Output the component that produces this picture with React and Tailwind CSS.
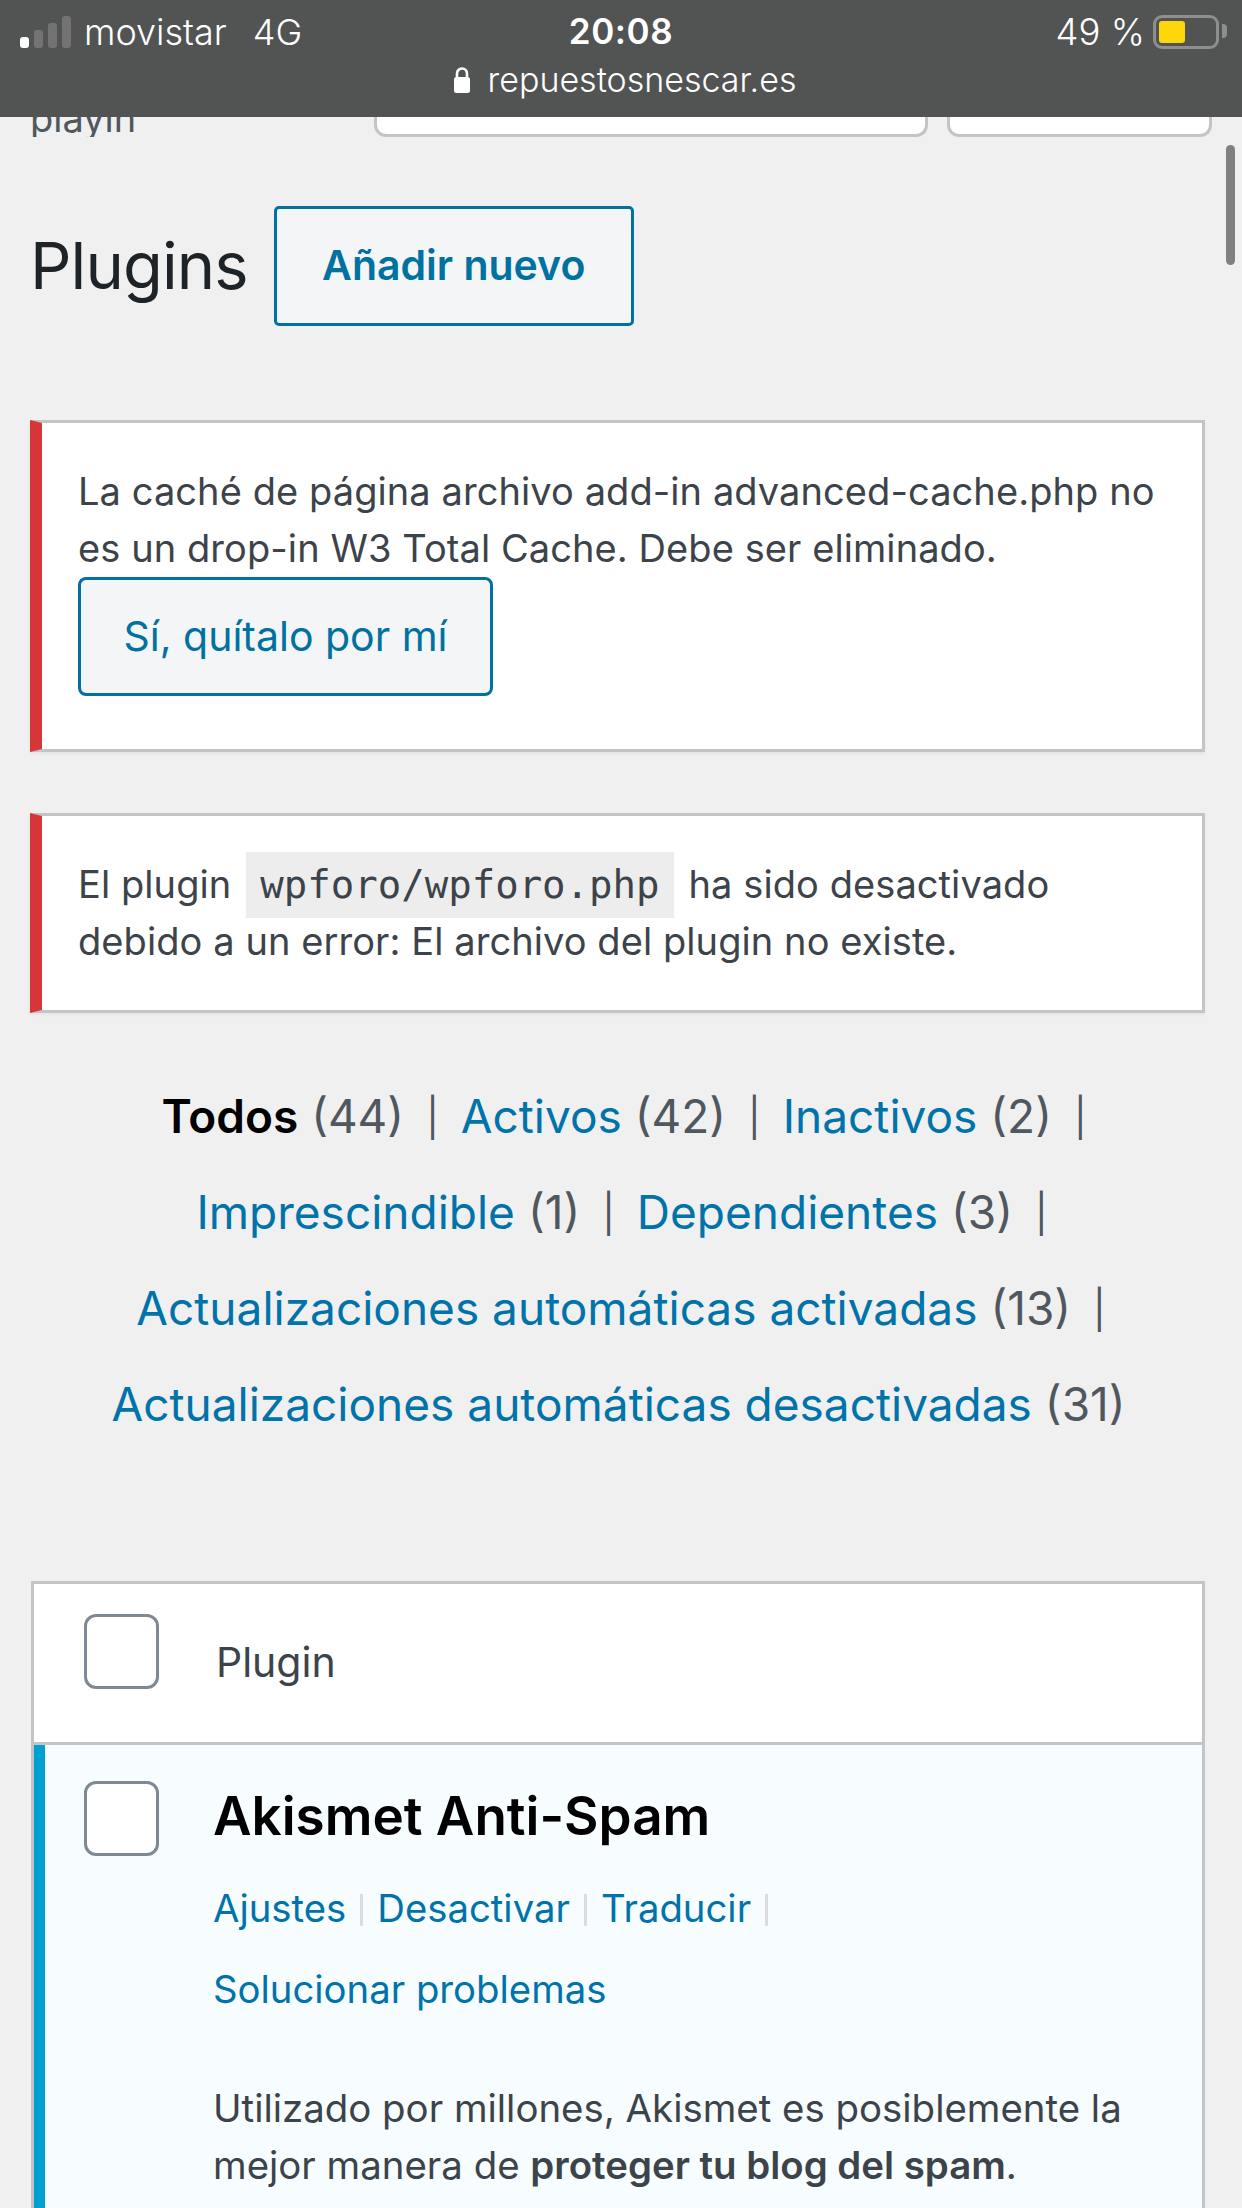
import React from "react";

const font = { fontFamily: "Inter, 'Noto Sans', sans-serif" };

function Check({ className = "" }) {
  return <div className={"w-[75px] h-[75px] bg-white border-[3px] border-[#7e8993] rounded-[12px] shrink-0 " + className} />;
}

function Bar({ last = false }) {
  return <span className={(last ? "ml-[22px] " : "mx-[22px] ") + "text-[38px] leading-none text-[#50575e] align-[2px]"}>|</span>;
}

function Count({ n }) {
  return <span className="text-[#50575e]"> ({n})</span>;
}

function L({ children }) {
  return <span className="text-[#0073aa]">{children}</span>;
}

function Sep() {
  return <span className="inline-block w-[3px] h-[32px] bg-[#dcdcde] mx-[14px] align-[-4px]" />;
}

export default function App() {
  return (
    <div className="relative w-[1242px] h-[2208px] overflow-hidden bg-[#f0f0f1]" style={font}>
      <header className="h-[117px] bg-[#525353] text-white relative z-10">
        <div className="flex items-center justify-between h-[64px] pl-[20px] pr-[8px]">
          <div className="flex items-center">
            <div className="flex items-end gap-[5px] h-[32px] mt-[-1px]">
              <div className="w-[9px] h-[11px] bg-white rounded-[3px]" />
              <div className="w-[9px] h-[18px] bg-[#737373] rounded-[3px]" />
              <div className="w-[9px] h-[25px] bg-[#737373] rounded-[3px]" />
              <div className="w-[9px] h-[32px] bg-[#737373] rounded-[3px]" />
            </div>
            <span className="ml-[13px] text-[36px] leading-[40px] font-light">movistar</span>
            <span className="ml-[26px] text-[36px] leading-[40px] font-light">4G</span>
          </div>
          <div className="flex items-center">
            <span className="text-[36.5px] leading-[40px] font-light mr-[8px]">49 %</span>
            <div className="relative w-[66px] h-[34px] border-[3px] border-[#8e8e8e] rounded-[9px] p-[3px] mr-[15px]">
              <div className="w-[26px] h-[22px] bg-[#ffd60a] rounded-[3px]" />
              <div className="absolute right-[-11px] top-[6px] w-[5px] h-[14px] bg-[#8e8e8e] rounded-r-[4px]" />
            </div>
          </div>
        </div>
        <div className="absolute left-0 right-0 top-[5px] text-center text-[35px] leading-[53px] font-semibold tracking-[0.6px]">20:08</div>
        <div className="absolute left-[7px] right-0 top-[58px] flex justify-center items-center">
          <svg width="18" height="28" viewBox="0 0 18 28" className="mr-[17px]" fill="none">
            <path d="M4 12V7.5a5 5 0 0 1 10 0V12" stroke="white" strokeWidth="2.6" />
            <rect x="1" y="11" width="16" height="16" rx="2.5" fill="white" />
          </svg>
          <span className="text-[34px] leading-[44px] font-light">repuestosnescar.es</span>
        </div>
      </header>

      <div className="flex items-end h-[20px] relative">
        <div className="h-[20px] overflow-hidden w-[374px] pl-[30px]">
          <div className="text-[38px] leading-[40px] text-[#50575e] mt-[-19px]">playin</div>
        </div>
        <div className="w-[554px] h-[20px] bg-white border-b-[3px] border-x-[3px] border-[#c3c4c7] rounded-b-[12px]" />
        <div className="w-[265px] h-[20px] ml-[19px] bg-white border-b-[3px] border-x-[3px] border-[#c3c4c7] rounded-b-[12px]" />
      </div>

      <div className="absolute left-[1226px] top-[145px] w-[9px] h-[120px] bg-[#808080] rounded-full" />

      <div className="flex items-center mt-[69px] pl-[30px]">
        <h1 className="text-[65px] leading-[80px] text-[#1d2327] font-normal tracking-[-0.9px]">Plugins</h1>
        <div className="ml-[26px] w-[360px] h-[120px] flex items-center justify-center bg-[#f3f5f6] border-[3px] border-[#0071a1] rounded-[5px] text-[#0071a1] text-[41px] font-semibold">
          Añadir nuevo
        </div>
      </div>

      <div className="ml-[30px] mr-[37px] mt-[94px] h-[332px] bg-white border-[3px] border-[#c3c4c7] border-l-[12px] border-l-[#d63638] pl-[36px] pt-[40px] shadow-[0_2px_3px_rgba(0,0,0,0.05)]">
        <p className="text-[38px] leading-[57px] tracking-[0.08px] text-[#3c434a] whitespace-nowrap">La caché de página archivo add-in advanced-cache.php no</p>
        <p className="text-[38px] leading-[57px] tracking-[0.08px] text-[#3c434a] whitespace-nowrap">es un drop-in W3 Total Cache. Debe ser eliminado.</p>
        <div className="w-[415px] h-[119px] flex items-center justify-center bg-[#f3f5f6] border-[3px] border-[#0071a1] rounded-[8px] text-[#0071a1] text-[41px]">
          Sí, quítalo por mí
        </div>
      </div>

      <div className="ml-[30px] mr-[37px] mt-[61px] h-[200px] bg-white border-[3px] border-[#c3c4c7] border-l-[12px] border-l-[#d63638] pl-[36px] pt-[40px] shadow-[0_2px_3px_rgba(0,0,0,0.05)]">
        <p className="text-[38px] h-[57px] leading-[57px] tracking-[0.08px] text-[#3c434a] whitespace-nowrap flex items-center">
          El plugin
          <code className="mx-[15px] px-[14px] h-[66px] leading-[66px] bg-[#ededed] text-[39px] tracking-normal text-[#3c434a]" style={{ fontFamily: "'DejaVu Sans Mono', monospace" }}>wpforo/wpforo.php</code>
          ha sido desactivado
        </p>
        <p className="text-[38px] leading-[57px] tracking-[0.08px] text-[#3c434a] whitespace-nowrap">debido a un error: El archivo del plugin no existe.</p>
      </div>

      <div className="mt-[55px] text-center text-[46px] leading-[96px] whitespace-nowrap">
        <div className="pl-[6px]"><span className="font-semibold text-black">Todos</span><Count n="44" /><Bar /><L>Activos</L><Count n="42" /><Bar /><L>Inactivos</L><Count n="2" /><Bar last /></div>
        <div className="pl-[2px]"><L>Imprescindible</L><Count n="1" /><Bar /><L>Dependientes</L><Count n="3" /><Bar last /></div>
        <div><L>Actualizaciones automáticas activadas</L><Count n="13" /><Bar last /></div>
        <div className="pr-[5px]"><L>Actualizaciones automáticas desactivadas</L><Count n="31" /></div>
      </div>

      <div className="ml-[31px] mr-[37px] mt-[129px] border-[3px] border-[#c3c4c7] border-b-0">
        <div className="h-[161px] bg-white border-b-[3px] border-[#c3c4c7] flex items-start pl-[50px] pt-[30px]">
          <Check />
          <span className="ml-[57px] mt-[20px] text-[41px] leading-[56px] text-[#3c434a]">Plugin</span>
        </div>
        <div className="h-[600px] bg-[#f7fcff] border-l-[11px] border-[#00a0d2] flex items-start pl-[39px] pt-[36px]">
          <Check />
          <div className="ml-[54px] text-[38.4px] leading-[57px] text-[#3c434a] whitespace-nowrap">
            <div className="text-[53px] leading-[70px] font-semibold text-black">Akismet Anti-Spam</div>
            <div className="mt-[29px] text-[38.3px] leading-[56px]">
              <L>Ajustes</L><Sep /><L>Desactivar</L><Sep /><L>Traducir</L><Sep />
            </div>
            <div className="mt-[25px] text-[38.3px] leading-[56px]"><L>Solucionar problemas</L></div>
            <p className="mt-[63px]">Utilizado por millones, Akismet es posiblemente la</p>
            <p>mejor manera de <strong className="font-semibold">proteger tu blog del spam</strong>.</p>
          </div>
        </div>
      </div>
    </div>
  );
}
